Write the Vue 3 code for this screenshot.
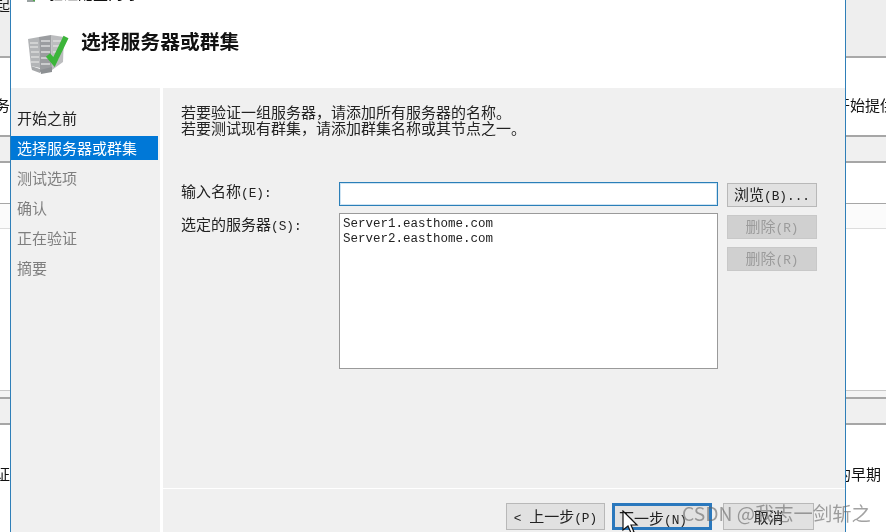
<script setup>
const steps = [
  { label: '开始之前', state: 'done' },
  { label: '选择服务器或群集', state: 'active' },
  { label: '测试选项', state: 'todo' },
  { label: '确认', state: 'todo' },
  { label: '正在验证', state: 'todo' },
  { label: '摘要', state: 'todo' },
]
const servers = ['Server1.easthome.com', 'Server2.easthome.com']
</script>

<template>
  <div class="screen">
    <div class="side side-left">
      <div class="b-top"><span class="clip-top">起</span></div>
      <div class="b-white b1"><span class="stext">服务</span></div>
      <div class="b-band"></div>
      <div class="b-white b2"></div>
      <div class="b-light"></div>
      <div class="b-white b3"></div>
      <div class="b-thin"></div>
      <div class="b-band"></div>
      <div class="b-white b4"><span class="stext">验证</span></div>
    </div>

    <div class="window">
      <div class="titlebar">
        <svg class="tb-icon" width="14" height="14" viewBox="0 0 14 14"><rect x="1" y="1" width="8" height="12" fill="#9aa2a2"/><path d="M5 8l3 3 5-8" fill="none" stroke="#3fae3a" stroke-width="2"/></svg>
        <span class="tb-text">验证配置向导</span>
      </div>
      <header class="head">
        <svg class="head-icon" width="44" height="42" viewBox="0 0 44 42">
          <path d="M1 7 12 5 13 36 4 34Z" fill="#b3b5b7"/>
          <path d="M12 5 24 3 25 37 13 40Z" fill="#9b9da0"/>
          <path d="M24 3 37 5 36 30 25 38Z" fill="#bcbdbf"/>
          <path d="M3 11h8M3 15h8M4 20h8M4 25h8M4 30h8M14 9h9M14 14h9M14 20h9M14 26h9M14 32h9M26 9h9M26 14h9M26 20h8M26 26h6" stroke="#dcdcdc" stroke-width="1.6"/>
          <path d="M4 34 13 37 13 41 5 38Z" fill="#a6a8aa"/>
          <path d="M13 38 25 35 25 40 14 42Z" fill="#8d9093"/>
          <path d="M21 23l6 7L39 5" fill="none" stroke="#3cb53a" stroke-width="5.5"/>
        </svg>
        <h1 class="head-title">选择服务器或群集</h1>
      </header>

      <div class="body">
        <nav class="nav">
          <div v-for="s in steps" :key="s.label" class="step" :class="s.state">{{ s.label }}</div>
        </nav>
        <main class="panel">
          <div class="content">
            <p class="intro">若要验证一组服务器，请添加所有服务器的名称。<br>若要测试现有群集，请添加群集名称或其节点之一。</p>
            <div class="form">
              <label class="lab lab1">输入名称<span class="lat">(E):</span></label>
              <div class="field"></div>
              <button class="btn side-btn">浏览<span class="lat">(B)...</span></button>

              <label class="lab lab2">选定的服务器<span class="lat">(S):</span></label>
              <div class="list">
                <div v-for="s in servers" :key="s">{{ s }}</div>
              </div>
              <div class="list-btns">
                <button class="btn side-btn off">删除<span class="lat">(R)</span></button>
                <button class="btn side-btn off">删除<span class="lat">(R)</span></button>
              </div>
            </div>
          </div>
          <footer class="foot">
            <button class="btn nav-btn prev"><span class="lat">&lt; </span>上一步<span class="lat">(P)</span></button>
            <button class="btn nav-btn next">下一步<span class="lat">(N)</span></button>
            <button class="btn nav-btn cancel">取消</button>
          </footer>
        </main>
      </div>
    </div>

    <div class="side side-right">
      <div class="b-top"></div>
      <div class="b-white b1"><span class="stext r">开始提供</span></div>
      <div class="b-band"></div>
      <div class="b-white b2"></div>
      <div class="b-light"></div>
      <div class="b-white b3"></div>
      <div class="b-thin"></div>
      <div class="b-band"></div>
      <div class="b-white b4"><span class="stext r">的早期</span></div>
    </div>

    <svg class="cursor" width="18" height="24" viewBox="0 0 18 24">
      <path d="M2 1v19l5-4 3 7 3-1-3-7h6Z" fill="#fff" stroke="#111" stroke-width="1.2"/>
    </svg>
    <div class="mark">CSDN @我志一剑斩之</div>
  </div>
</template>

<style scoped>
.screen {
  width: 886px;
  height: 532px;
  display: flex;
  overflow: hidden;
  position: relative;
  background: #fff;
  color: #1a1a1a;
  font-family: "Noto Sans CJK SC", "Liberation Sans", sans-serif;
  font-size: 15px;
  filter: blur(0.4px);
}
.lat { font-family: "Liberation Mono", monospace; font-size: 12.8px; white-space: pre; }
.side { display: flex; flex-direction: column; overflow: hidden; flex: none; }
.side-left { width: 10px; align-items: flex-end; }
.side-right { width: 40px; }
.side > div { width: 100%; flex: none; display: flex; overflow: hidden; }
.side-left > div { justify-content: flex-end; }
.b-top { height: 58px; background: #eeeeee; border-bottom: 2px solid #a9a9a9; box-sizing: border-box; }
.clip-top { line-height: 14px; height: 14px; margin-top: -2px; white-space: nowrap; }
.b-white { background: #fff; align-items: flex-start; }
.b1 { height: 77px; }
.b2 { height: 40px; }
.b3 { height: 161px; }
.b4 { height: 109px; }
.b-band { height: 28px; box-sizing: border-box; background: #f0f0f0; border-top: 2px solid #a6a6a6; border-bottom: 2px solid #a6a6a6; }
.b-light { height: 26px; box-sizing: border-box; background: #fbfbfb; border-top: 1px solid #a6a6a6; border-bottom: 1px solid #dddddd; }
.b-thin { height: 7px; box-sizing: border-box; background: #f4f4f4; border-top: 1px solid #c8c8c8; }
.stext { white-space: nowrap; flex: none; line-height: 20px; color: #111; }
.b1 .stext { margin-top: 37px; }
.b4 .stext { margin-top: 39px; }
.b1 .stext.r { margin-left: -11px; }
.b4 .stext.r { margin-left: -10px; }

.window {
  width: 836px;
  flex: none;
  box-sizing: border-box;
  border-left: 1px solid #2f7fb8;
  border-right: 1px solid #2f7fb8;
  background: #fff;
  display: flex;
  flex-direction: column;
}
.titlebar {
  height: 6px;
  flex: none;
  display: flex;
  align-items: flex-end;
  gap: 8px;
  padding-left: 15px;
  overflow: hidden;
}
.tb-icon { flex: none; margin-bottom: 3px; }
.tb-text { flex: none; font-size: 15px; line-height: 20px; margin-bottom: 3px; color: #111; font-weight: 500; }
.head {
  height: 82px;
  flex: none;
  display: flex;
  align-items: flex-start;
  padding-left: 16px;
  box-sizing: border-box;
}
.head-icon { margin-top: 26px; flex: none; filter: blur(0.5px); }
.head-title {
  margin: 21px 0 0 10px;
  font-size: 19.8px;
  line-height: 28px;
  font-weight: 700;
  color: #111;
}
.body { flex: 1; display: flex; min-height: 0; background: #f0f0f0; }
.nav {
  flex: none;
  box-sizing: border-box;
  padding-top: 15px;
  border-right: 3px solid #fff;
  width: 152px;
}
.step {
  height: 30px;
  line-height: 30px;
  padding-left: 6px;
  width: 147px;
  box-sizing: border-box;
  font-size: 15px;
}
.step.done { color: #222; }
.step.todo { color: #7f7f7f; }
.step.active { background: #0078d7; color: #fff; height: 24px; line-height: 23px; margin: 3px 0 3px; }
.panel { flex: 1; display: flex; flex-direction: column; min-width: 0; }
.content { flex: 1; padding: 16px 0 0 18px; }
.intro { margin: 0; font-size: 15px; line-height: 16px; color: #222; }
.form {
  margin-top: 46px;
  display: grid;
  grid-template-columns: 158px 379px 100px;
  row-gap: 6px;
  align-items: start;
}
.lab { font-size: 15px; line-height: 20px; color: #222; }
.lab1 { margin-top: -1px; }
.lab2 { margin-top: 1px; }
.field {
  height: 24px;
  box-sizing: border-box;
  background: #fff;
  border: 1px solid #2b7fb8;
  box-shadow: inset 0 0 0 1px #cfe4f3;
}
.list {
  height: 156px;
  box-sizing: border-box;
  background: #fff;
  border: 1px solid #9a9a9a;
  padding: 3px 3px;
  font-family: "Liberation Mono", monospace;
  font-size: 12.5px;
  line-height: 15px;
  color: #222;
}
.btn {
  box-sizing: border-box;
  font-family: inherit;
  font-size: 15px;
  padding: 0;
  background: #e1e1e1;
  border: 1px solid #b8b8b8;
  color: #222;
  white-space: nowrap;
}
.side-btn { width: 90px; height: 24px; line-height: 20px; margin-left: 9px; margin-top: 1px; }
.side-btn.off { background: #d0d0d0; border-color: #c8c8c8; color: #9b9b9b; }
.list-btns { display: flex; flex-direction: column; gap: 8px; padding-top: 2px; }
.list-btns .side-btn { margin-top: 0; }
.foot {
  height: 44px;
  flex: none;
  box-sizing: border-box;
  border-top: 1px solid #fff;
  padding: 14px 0 0 343px;
  display: flex;
  gap: 7px;
  align-items: flex-start;
}
.nav-btn { height: 27px; line-height: 24px; width: 99px; }
.next { width: 100px; border: 3px solid #2a78bd; padding-right: 18px; }
.cancel { width: 91px; margin-left: 4px; }

.cursor { position: absolute; left: 621px; top: 510px; }
.mark {
  position: absolute;
  left: 682px;
  top: 499px;
  font-size: 19.3px;
  line-height: 28px;
  color: rgba(100, 100, 100, 0.6);
  white-space: nowrap;
}
</style>
